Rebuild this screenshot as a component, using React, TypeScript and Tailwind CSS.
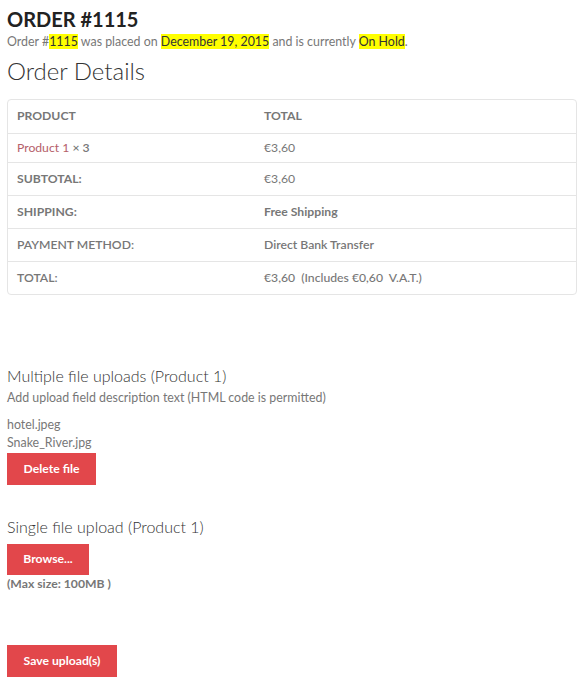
import React from "react";

const rows = [
  { label: "SUBTOTAL:", value: "€3,60", lw: "font-bold", vw: "font-normal" },
  { label: "SHIPPING:", value: "Free Shipping", lw: "font-bold", vw: "font-bold" },
  { label: "PAYMENT METHOD:", value: "Direct Bank Transfer", lw: "font-semibold", vw: "font-semibold" },
  { label: "TOTAL:", value: "€3,60\u00a0 (Includes €0,60\u00a0 V.A.T.)", lw: "font-semibold", vw: "font-medium" },
];

export default function App() {
  return (
    <div className="w-[584px] min-h-[686px] bg-white px-[7px] text-[#777] [font-family:Lato,'Liberation_Sans',sans-serif]">
      <h1 className="pt-[7px] text-[20px] leading-[24px] font-bold text-[#222]">ORDER #1115</h1>
      <p className="mt-[3px] text-[12.4px] leading-[16px]">
        Order #<mark className="bg-[#ffff00] text-[#333]">1115</mark> was placed on{" "}
        <mark className="bg-[#ffff00] text-[#333]">December 19, 2015</mark> and is currently{" "}
        <mark className="bg-[#ffff00] text-[#333]">On Hold</mark>.
      </p>
      <h2 className="mt-[6px] text-[24px] leading-[30px] font-light text-[#333]">Order Details</h2>

      <div className="mt-[13px] rounded-[4px] border border-[#e5e5e5] text-[12.2px]">
        <div className="grid grid-cols-[256px_1fr] h-[33px] items-center font-bold">
          <div className="pl-[9px]">PRODUCT</div>
          <div>TOTAL</div>
        </div>
        <div className="grid grid-cols-[256px_1fr] h-[29px] items-center border-t border-[#e5e5e5]">
          <div className="pl-[9px]">
            <span className="text-[#b5606a]">Product 1</span> <span className="font-semibold">× 3</span>
          </div>
          <div>€3,60</div>
        </div>
        {rows.map((r) => (
          <div key={r.label} className="grid grid-cols-[256px_1fr] h-[33px] items-center border-t border-[#e5e5e5]">
            <div className={`pl-[9px] ${r.lw}`}>{r.label}</div>
            <div className={r.vw}>{r.value}</div>
          </div>
        ))}
      </div>

      <div className="mt-[71px]">
        <h3 className="text-[16px] leading-[20px] font-light text-[#333]">Multiple file uploads (Product 1)</h3>
        <p className="mt-[4px] text-[12.4px] leading-[16px]">Add upload field description text (HTML code is permitted)</p>
        <div className="mt-[10px] text-[12.4px] leading-[18px]">
          <div>hotel.jpeg</div>
          <div>Snake_River.jpg</div>
        </div>
        <button className="mt-[1px] h-[32px] w-[89px] bg-[#e2474b] text-[12.2px] font-bold text-white">Delete file</button>
      </div>

      <div className="mt-[32px]">
        <h3 className="text-[16px] leading-[20px] font-light text-[#333]">Single file upload (Product 1)</h3>
        <button className="mt-[7px] h-[31px] w-[82px] bg-[#e2474b] text-[12.2px] font-bold text-white">Browse...</button>
        <p className="text-[12.2px] leading-[18px] font-bold">(Max size: 100MB )</p>
      </div>

      <button className="mt-[52px] h-[32px] w-[110px] bg-[#e2474b] text-[12.2px] font-bold text-white">Save upload(s)</button>
    </div>
  );
}
